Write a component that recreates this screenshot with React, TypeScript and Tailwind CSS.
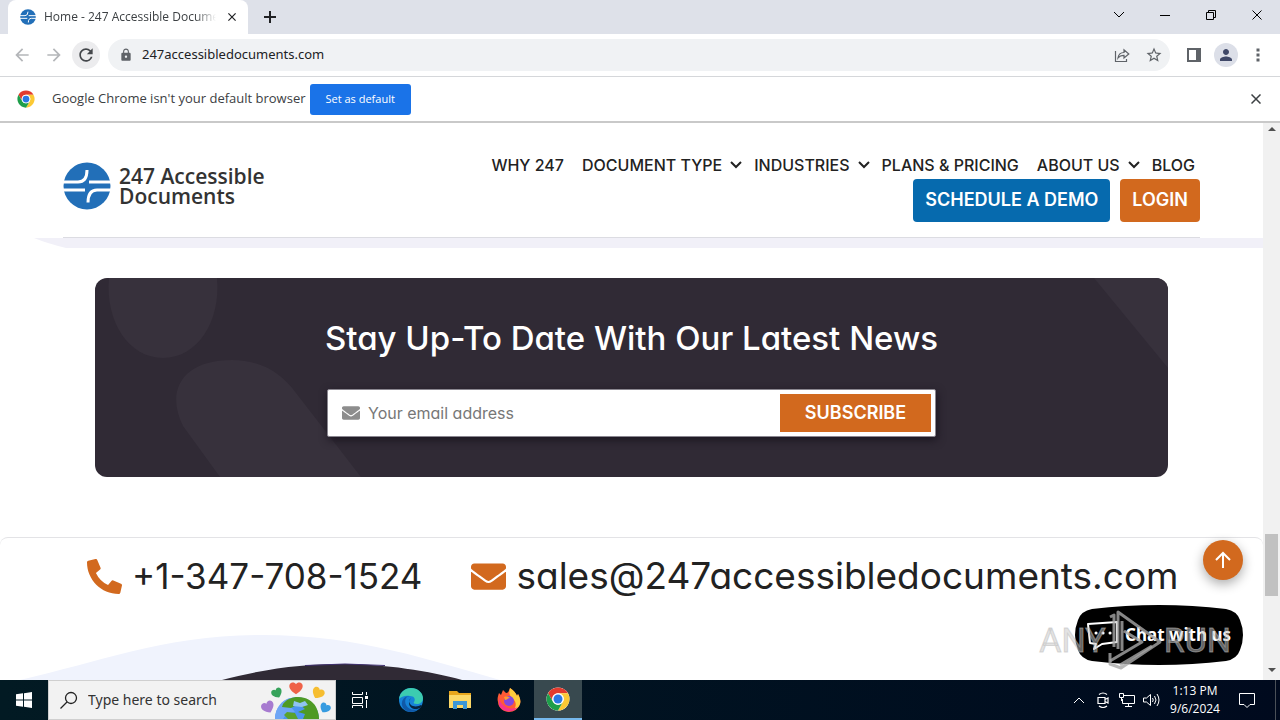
import type { ReactNode } from "react";
import { FaEnvelope, FaPhoneAlt } from "react-icons/fa";
import { MdArrowBack, MdArrowForward, MdLock, MdPerson, MdRefresh, MdStarBorder } from "react-icons/md";

const poppins = "font-[Inter,sans-serif] [font-feature-settings:'cv11']";

const navItems = [
  { label: "WHY 247", menu: false },
  { label: "DOCUMENT TYPE", menu: true },
  { label: "INDUSTRIES", menu: true },
  { label: "PLANS & PRICING", menu: false },
  { label: "ABOUT US", menu: true },
  { label: "BLOG", menu: false },
];

const hearts = [
  { place: "translate(35 7) scale(1.25)", fill: "#ef6248" },
  { place: "translate(16 12) rotate(-25)", fill: "#37a35b" },
  { place: "translate(57 12) rotate(30) scale(1.15)", fill: "#f6bd2f" },
  { place: "translate(7 26) rotate(-25) scale(1.2)", fill: "#a77bd0" },
  { place: "translate(64 27) rotate(30)", fill: "#369be0" },
];

const BrandMark = ({ className }: { className: string }) => (
  <svg viewBox="0 0 48 48" className={className} aria-hidden="true">
    <circle cx="24" cy="24" r="23.5" fill="#226fb8" />
    <g fill="none" stroke="#fff" strokeWidth="3">
      <path d="M0 20h15q9 0 9-12" />
      <path d="M26 20h22" />
      <path d="M0 28h22" />
      <path d="M48 28H34q-9 0-9 12.500" />
    </g>
  </svg>
);

const ChromeLogo = ({ className }: { className: string }) => (
  <svg viewBox="0 0 48 48" className={className} aria-hidden="true">
    <circle cx="24" cy="24" r="23" fill="#fff" />
    <path d="M4.100 12.500A23 23 0 0 1 43.900 12.500H24a11.500 11.500 0 0 0-10 17.200z" fill="#e33b2e" />
    <path d="M43.900 12.500A23 23 0 0 1 24 47l10-17.300A11.500 11.500 0 0 0 24 12.500z" fill="#fcc934" />
    <path d="M24 47A23 23 0 0 1 4.100 12.500L14 29.700a11.500 11.500 0 0 0 20 0z" fill="#1e9e4a" />
    <circle cx="24" cy="24" r="11.500" fill="#fff" />
    <circle cx="24" cy="24" r="9" fill="#2a78e4" />
  </svg>
);

const Chevron = ({ className }: { className: string }) => (
  <svg viewBox="0 0 12 8" className={className} fill="none" stroke="currentColor" aria-hidden="true">
    <path d="M1 1l5 5 5-5" />
  </svg>
);

const Cross = ({ className }: { className: string }) => (
  <svg viewBox="0 0 10 10" className={className} fill="none" stroke="currentColor" aria-hidden="true">
    <path d="M.5.5l9 9M9.500.5l-9 9" />
  </svg>
);

const IconButton = ({ label, className, children }: { label: string; className: string; children: ReactNode }) => (
  <button aria-label={label} className={`flex shrink-0 items-center justify-center ${className}`}>
    {children}
  </button>
);

const TabStrip = () => (
  <div className="flex h-[34px] items-stretch bg-[#dee1e9] text-[#202124]">
    <div className="ml-2 flex w-60 items-center rounded-t-lg bg-white pl-3">
      <BrandMark className="size-4 shrink-0" />
      <span className="ml-2 flex-1 overflow-hidden whitespace-nowrap text-xs text-[#3c4043] font-['Open_Sans',sans-serif] [mask-image:linear-gradient(to_right,#000_88%,transparent)]">
        Home - 247 Accessible Documents
      </span>
      <IconButton label="Close tab" className="w-8">
        <Cross className="size-2 stroke-[1.500]" />
      </IconButton>
    </div>
    <IconButton label="New tab" className="w-11">
      <svg viewBox="0 0 12 12" className="size-3" stroke="currentColor" strokeWidth="2">
        <path d="M6 0v12M0 6h12" />
      </svg>
    </IconButton>
    <div className="ml-auto flex pb-1 text-black">
      <IconButton label="Search tabs" className="w-[46px]">
        <Chevron className="h-2 w-3" />
      </IconButton>
      <IconButton label="Minimize" className="w-[46px]">
        <span className="h-px w-2.5 bg-black" />
      </IconButton>
      <IconButton label="Restore" className="w-[46px]">
        <svg viewBox="0 0 10 10" className="size-2.5" fill="none" stroke="currentColor">
          <path d="M.5 2.500h7v7h-7zM2.500 2.500v-2h7v7h-2" />
        </svg>
      </IconButton>
      <IconButton label="Close" className="w-[46px]">
        <Cross className="size-2.5" />
      </IconButton>
    </div>
  </div>
);

const Toolbar = () => (
  <div className="flex h-[43px] items-center border-b border-[#d5d7da] bg-white pl-2 text-[#5f6368]">
    <IconButton label="Back" className="size-7 text-[#b4b6b9]">
      <MdArrowBack className="size-5" />
    </IconButton>
    <IconButton label="Forward" className="ml-1 size-7 text-[#b4b6b9]">
      <MdArrowForward className="size-5" />
    </IconButton>
    <IconButton label="Reload" className="ml-1 size-7 rounded-full bg-[#ececee] text-[#44474b]">
      <MdRefresh className="size-5" />
    </IconButton>
    <div className="ml-2 flex h-8 flex-1 items-center rounded-full bg-[#f0f2f4] pl-[11px]">
      <MdLock className="size-3.5" />
      <input
        aria-label="Address"
        defaultValue="247accessibledocuments.com"
        className="ml-[9px] min-w-0 flex-1 bg-transparent text-[13px] text-[#202124] outline-none"
      />
      <IconButton label="Share" className="w-8">
        <svg viewBox="0 0 16 16" className="size-4" fill="none" stroke="currentColor" strokeWidth="1.200">
          <path d="M1.500 4v10.500h11V12M4 11c.5-4 2.500-5.500 6-5.500V2.800L14.800 7 10 11V8.300C7.500 8.300 5.500 9 4 11z" />
        </svg>
      </IconButton>
      <IconButton label="Bookmark" className="w-8">
        <MdStarBorder className="size-[18px]" />
      </IconButton>
    </div>
    <IconButton label="Side panel" className="ml-2 w-8">
      <svg viewBox="0 0 14 14" className="size-3.5">
        <path d="M0 0h14v14H0zM2 2v10h7V2z" fill="currentColor" fillRule="evenodd" />
      </svg>
    </IconButton>
    <IconButton label="Profile" className="ml-1 size-6 rounded-full bg-[#dcdfe8] text-[#3f4868]">
      <MdPerson className="size-[18px]" />
    </IconButton>
    <IconButton label="Menu" className="ml-1 mr-1.5 w-8">
      <svg viewBox="0 0 4 14" className="h-3.5 w-1" fill="currentColor">
        <path d="M.5.5h3v3h-3zM.5 5.500h3v3h-3zM.5 10.500h3v3h-3z" />
      </svg>
    </IconButton>
  </div>
);

const InfoBar = () => (
  <div className="flex h-[46px] items-center border-b-2 border-[#c9c9c9] bg-white pl-[17px] text-[#3c4043] font-['Open_Sans',sans-serif]">
    <ChromeLogo className="size-[18px]" />
    <p className="ml-[17px] text-[13px]">Google Chrome isn't your default browser</p>
    <button className="ml-1 h-[31px] rounded-[3px] bg-[#1a73e8] px-4 text-[11px] text-white">Set as default</button>
    <IconButton label="Dismiss" className="ml-auto w-12">
      <Cross className="size-2.5 stroke-[1.500]" />
    </IconButton>
  </div>
);

const SiteHeader = () => (
  <header className="relative mx-[63px] flex h-[115px] items-center justify-between border-b border-[#dcdce2]">
    <a href="#home" className="mt-3 flex items-center gap-2 text-[21px] font-semibold leading-5 text-[#333] font-['Open_Sans',sans-serif]">
      <BrandMark className="size-12" />
      <span>
        247 Accessible
        <br />
        Documents
      </span>
    </a>
    <div className="mt-3 flex flex-col items-end">
      <nav className="flex h-7 items-center text-base font-medium text-[#222]">
        {navItems.map((item) => (
          <a
            key={item.label}
            href="#menu"
            className={`flex items-center gap-2 whitespace-nowrap pl-2 last:pr-[5px] ${item.menu ? "pr-1" : "pr-2.5"}`}
          >
            {item.label}
            {item.menu && <Chevron className="h-2 w-3 stroke-2" />}
          </a>
        ))}
      </nav>
      <div className="flex gap-2.5 text-lg font-semibold text-white">
        <a href="#demo" className="flex h-[43px] items-center rounded bg-[#066aae] px-3">
          SCHEDULE A DEMO
        </a>
        <a href="#login" className="flex h-[43px] items-center rounded bg-[#d2691e] px-3">
          LOGIN
        </a>
      </div>
    </div>
  </header>
);

const Newsletter = () => (
  <section className="relative mx-[95px] mt-[30px] flex h-[199px] flex-col items-center overflow-hidden rounded-xl bg-[#302a35]">
    <svg viewBox="0 0 1073 199" preserveAspectRatio="none" className="absolute inset-0 size-full" fill="#37313c" aria-hidden="true">
      <path d="M14 0C10 44 34 80 68 80s58-36 54-80z" />
      <path d="M125 199L88 148C70 112 88 82 137 82c30 0 50 14 64 33l65 84z" />
      <path d="M999 0l74 90V0z" />
    </svg>
    <h2 className="relative mt-[34px] text-[33px] font-medium leading-[52px] text-white">
      Stay Up-To Date With Our Latest News
    </h2>
    <form className="relative mt-[25px] flex h-12 w-[609px] max-w-full items-center rounded-xs border border-[#8a8790] bg-white py-1 pl-3.5 pr-1 shadow-[1px_3px_8px_#1b1620]">
      <label htmlFor="email" className="text-[#8d8d8d]">
        <FaEnvelope className="size-[18px]" aria-label="Email" />
      </label>
      <input
        id="email"
        type="email"
        placeholder="Your email address"
        className="ml-2 min-w-0 flex-1 text-base outline-none placeholder:text-[#777]"
      />
      <button type="button" className="h-full w-[151px] bg-[#d2691e] text-lg font-semibold text-white">
        SUBSCRIBE
      </button>
    </form>
  </section>
);

const Contact = () => (
  <footer className="mt-[60px] flex flex-1 flex-col rounded-t-lg border-t border-[#e3e3e6]">
    <div className="ml-[87px] mt-3 flex h-[52px] items-center gap-[49px] whitespace-nowrap text-[#222]">
      <a href="tel:+13477081524" className="flex items-center gap-2.5 text-[35px]">
        <FaPhoneAlt className="size-[35px] text-[#d2691e]" />
        +1-347-708-1524
      </a>
      <a href="mailto:sales@247accessibledocuments.com" className="flex items-center gap-2.5 text-[37px]">
        <FaEnvelope className="size-[35px] text-[#d2691e]" />
        sales@247accessibledocuments.com
      </a>
    </div>
    <svg viewBox="0 0 1263 48" className="mt-auto w-full" aria-hidden="true">
      <path d="M20 48C100 30 165 3 262 3c98 0 170 26 238 45z" fill="#f0f3fd" />
      <path d="M222 48c46-12 82-16 122-16s86 7 118 16z" fill="#302a35" />
      <path d="M305 33.500q40-3 80 0" fill="none" stroke="#40306f" />
    </svg>
  </footer>
);

const ChatWidget = () => (
  <button className="absolute bottom-[15px] right-5 flex h-[60px] w-[168px] items-center gap-1.5 pl-3 text-[17px] font-bold text-white font-['Noto_Sans',sans-serif]">
    <svg viewBox="0 0 168 60" className="absolute inset-0 size-full" aria-hidden="true">
      <path d="M17 4q67-8 134 0 11 2 14 11 6 15 0 30-3 9-14 11-67 8-134 0-11-2-14-11-6-15 0-30Q6 6 17 4z" />
    </svg>
    <svg viewBox="0 0 32 30" className="relative h-[30px] w-8 shrink-0" fill="none" stroke="#fff" strokeWidth="2" strokeLinejoin="round">
      <path d="M1 4l29-2v20l-15 2-8 5 2-5-6-1z" />
      <path d="M9 13h.1M16 13h.1M23 13h.1" strokeWidth="3" strokeLinecap="round" />
    </svg>
    <span className="relative whitespace-nowrap">Chat with us</span>
  </button>
);

const Watermark = () => (
  <div className="pointer-events-none absolute bottom-2 right-8 flex h-16 items-center text-[34px] text-[#c8c8c8]/50 font-[Roboto,sans-serif]">
    <span className="[-webkit-text-stroke:1px_#bbb8]">ANY</span>
    <svg viewBox="0 0 58 62" className="h-[62px] w-[58px]" fill="none" stroke="#a8a8a8" strokeOpacity=".8" strokeWidth="3" strokeLinejoin="round">
      <path d="M4 8l4-2v32M12 40V3l42 30-39 26-11-4V44" />
      <path d="M16 12v30M18 22l18 11L4 52M46 37L14 56" />
    </svg>
    <span className="[-webkit-text-stroke:1px_#bbb8]">RUN</span>
  </div>
);

const Scrollbar = () => (
  <div className="flex w-[17px] shrink-0 flex-col items-center bg-[#f1f1f1] py-1 text-[#505050]" aria-hidden="true">
    <svg viewBox="0 0 8 4" className="w-2" fill="currentColor">
      <path d="M0 4l4-4 4 4z" />
    </svg>
    <div className="flex-[406]" />
    <div className="h-[62px] w-[13px] bg-[#c1c1c1]" />
    <div className="flex-[72]" />
    <svg viewBox="0 0 8 4" className="mb-1 w-2" fill="currentColor">
      <path d="M0 0l4 4 4-4z" />
    </svg>
  </div>
);

const EdgeLogo = () => (
  <svg viewBox="0 0 24 24" className="size-6">
    <circle cx="12" cy="12" r="12" fill="#1683d8" />
    <path d="M0 11C1 4 6 0 12 0c7 0 12 5 12 10 0 4-3 6-6 6-3 0-4-1-3-2 2-3 0-6-4-6-5-1-9 1-11 3z" fill="#3ccbb0" />
    <path d="M11 8c-4 0-6 4-4 9 2 4 7 6 13 4-3 2-6 3-9 3-6-1-9-6-8-10 1-4 4-6 8-6z" fill="#1059a8" />
    <path d="M12 10c-3 2-2 7 2 8 3 1 6 0 8-1 1 0 1 1 0 2-4 4-12 2-12-4 0-2 1-4 2-5z" fill="#06233f" />
  </svg>
);

const ExplorerLogo = () => (
  <svg viewBox="0 0 22 20" className="h-5 w-[22px]">
    <path d="M0 1h8l2 2h12v15H0z" fill="#e8a61c" />
    <path d="M0 5h22v13H0z" fill="#fcd867" />
    <path d="M4 11h14v8h-4v-4H8v4H4z" fill="#3b97d8" />
  </svg>
);

const FirefoxLogo = () => (
  <svg viewBox="0 0 24 24" className="size-6">
    <path d="M2 5l2 2 2-5 3 3C11 5 12 3 13 0c4 3 6 5 7 8l1-2c2 4 3 7 2 10-2 5-6 8-11 8S1 20 1 14c-1-3 0-6 1-9z" fill="#ff5a36" />
    <path d="M13 0c4 3 6 5 7 8l1-2c2 4 3 7 2 10-1 3-3 5-6 6 3-5 2-9-2-12-3-3-3-6-2-10z" fill="#ffcd3c" />
    <path d="M2 17c3 7 14 9 19 2-4 2-9 2-12 0-4-2-6-5-7-9z" fill="#f8348a" />
    <circle cx="12" cy="13" r="5" fill="#8347df" />
    <path d="M7 9c3-1 5 0 6 1-2 0-3 2-5 2z" fill="#ff9a2e" />
  </svg>
);

const EarthArt = () => (
  <svg viewBox="0 0 70 38" className="h-[38px] w-[70px] shrink-0" aria-hidden="true">
    <circle cx="36" cy="38" r="22" fill="#4c95ee" />
    <path d="M14 38c0-11 7-19 15-21l7 5-6 4 4 5-8 1-4 6z" fill="#6fa6f5" />
    <path d="M22 23c4-5 9-7 15-7 8 0 15 4 18 10 2 4 3 8 3 12H42l2-5-7-2 7-3-6-5-8 4-9-1z" fill="#4e9a24" />
    <path d="M26 31l8 1 3 6H27l-4-4z" fill="#5aa22c" />
    <path d="M33 20l6 2 5-2 3 4-6 2-9-1z" fill="#8fc4f0" />
    {hearts.map((heart) => (
      <path key={heart.fill} d="M0 5C-5 2-6-1-5-3s4-2 5 0c1-2 4-2 5 0S5 2 0 5z" transform={heart.place} fill={heart.fill} />
    ))}
  </svg>
);

const Taskbar = () => (
  <div className="flex h-10 shrink-0 items-stretch bg-linear-to-r from-[#021a23] to-[#000a1e] text-white">
    <IconButton label="Start" className="w-12">
      <svg viewBox="0 0 16 16" className="size-4" fill="#fff">
        <path d="M0 2.300l7-1v6.200H0zM8 1.200L16 0v7.500H8zM0 8.500h7v6.200l-7-1zM8 8.500h8V16l-8-1.200z" />
      </svg>
    </IconButton>
    <label className="flex w-72 items-center border border-[#cfcfcf] bg-[#f2f2f2] pl-[11px] text-[#222]">
      <svg viewBox="0 0 18 18" className="size-[18px] shrink-0" fill="none" stroke="currentColor" strokeWidth="1.300">
        <circle cx="11" cy="7" r="5.500" />
        <path d="M7 11l-6.500 6.500" />
      </svg>
      <input
        aria-label="Search Windows"
        placeholder="Type here to search"
        className="ml-2.5 min-w-0 flex-1 text-sm outline-none placeholder:text-[#333]"
      />
      <EarthArt />
      <span className="w-1" />
    </label>
    <IconButton label="Task view" className="w-12">
      <svg viewBox="0 0 16 16" className="size-4" fill="none" stroke="currentColor">
        <path d="M.5 0v2.500h10V0M.5 5.500h10v6H.5zM.5 16v-2.500h10V16M14.500 0v3M14.500 8v8" />
        <path d="M13 4h3v3h-3z" fill="currentColor" stroke="none" />
      </svg>
    </IconButton>
    <IconButton label="Edge" className="ml-0.5 w-[50px]">
      <EdgeLogo />
    </IconButton>
    <IconButton label="File Explorer" className="w-12">
      <ExplorerLogo />
    </IconButton>
    <IconButton label="Firefox" className="w-[50px]">
      <FirefoxLogo />
    </IconButton>
    <IconButton label="Chrome" className="w-12 border-b-2 border-[#76b9ed] bg-[#38494f]">
      <ChromeLogo className="size-6" />
    </IconButton>
    <div className="ml-auto flex items-center">
      <IconButton label="Hidden icons" className="w-6">
        <Chevron className="h-2 w-3 rotate-180" />
      </IconButton>
      <IconButton label="Meet now" className="w-6">
        <svg viewBox="0 0 16 16" className="size-4" fill="none" stroke="currentColor" strokeWidth="1.200">
          <path d="M3 5.500h7v6H3zM10 7.500l3-1.500v5l-3-1.500M4 2.500q4-3 8 0M4 14q4 3 8 0" />
        </svg>
      </IconButton>
      <IconButton label="Network" className="w-6">
        <svg viewBox="0 0 16 16" className="size-4" fill="none" stroke="currentColor">
          <path d="M5 3.500h10.500v8H3.500V7M9.500 11.500v3M6 14.500h7M.5 1.500h4v4h-4zM2.500 5.500V9" />
        </svg>
      </IconButton>
      <IconButton label="Volume" className="w-6">
        <svg viewBox="0 0 17 16" className="h-4 w-[17px]" fill="none" stroke="currentColor">
          <path d="M.5 6h3l4-3.500v11L3.500 10h-3zM9.500 6q1.500 2 0 4M11.500 4q3 4 0 8M14 2q4 6 0 12" />
        </svg>
      </IconButton>
      <div className="w-16 text-center text-xs leading-[18px] font-['Open_Sans',sans-serif]">
        1:13 PM
        <br />
        9/6/2024
      </div>
      <IconButton label="Notifications" className="w-10">
        <svg viewBox="0 0 16 16" className="size-4" fill="none" stroke="currentColor">
          <path d="M.5 1.500h15v11H11L8 15.500l-3-3H.5z" />
        </svg>
      </IconButton>
      <span className="ml-2 mr-1 h-10 w-px bg-[#4a5058]" />
    </div>
  </div>
);

const App = () => {
  return (
    <div className="flex h-screen flex-col overflow-hidden bg-white font-['Noto_Sans',sans-serif]">
      <TabStrip />
      <Toolbar />
      <InfoBar />
      <div className="flex min-h-0 flex-1">
        <main className={`flex min-w-0 flex-1 flex-col overflow-hidden ${poppins}`}>
          <SiteHeader />
          <svg viewBox="0 0 1263 10" preserveAspectRatio="none" className="h-2.5 w-full shrink-0" aria-hidden="true">
            <path d="M34 0h1229v10H66Q46 5 34 0z" fill="#f1f0f8" />
          </svg>
          <Newsletter />
          <Contact />
        </main>
        <Scrollbar />
      </div>
      <div className="relative">
        <IconButton
          label="Back to top"
          className="absolute bottom-[100px] right-[37px] size-10 rounded-full bg-[#d2691e] text-white shadow-[0_4px_12px_#0005]"
        >
          <svg viewBox="0 0 16 18" className="h-[18px] w-4" fill="none" stroke="currentColor" strokeWidth="2">
            <path d="M8 17V2M1 9l7-7 7 7" />
          </svg>
        </IconButton>
        <div className="absolute bottom-0 right-[17px]">
          <ChatWidget />
          <Watermark />
        </div>
      </div>
      <Taskbar />
    </div>
  );
};

export default App;
